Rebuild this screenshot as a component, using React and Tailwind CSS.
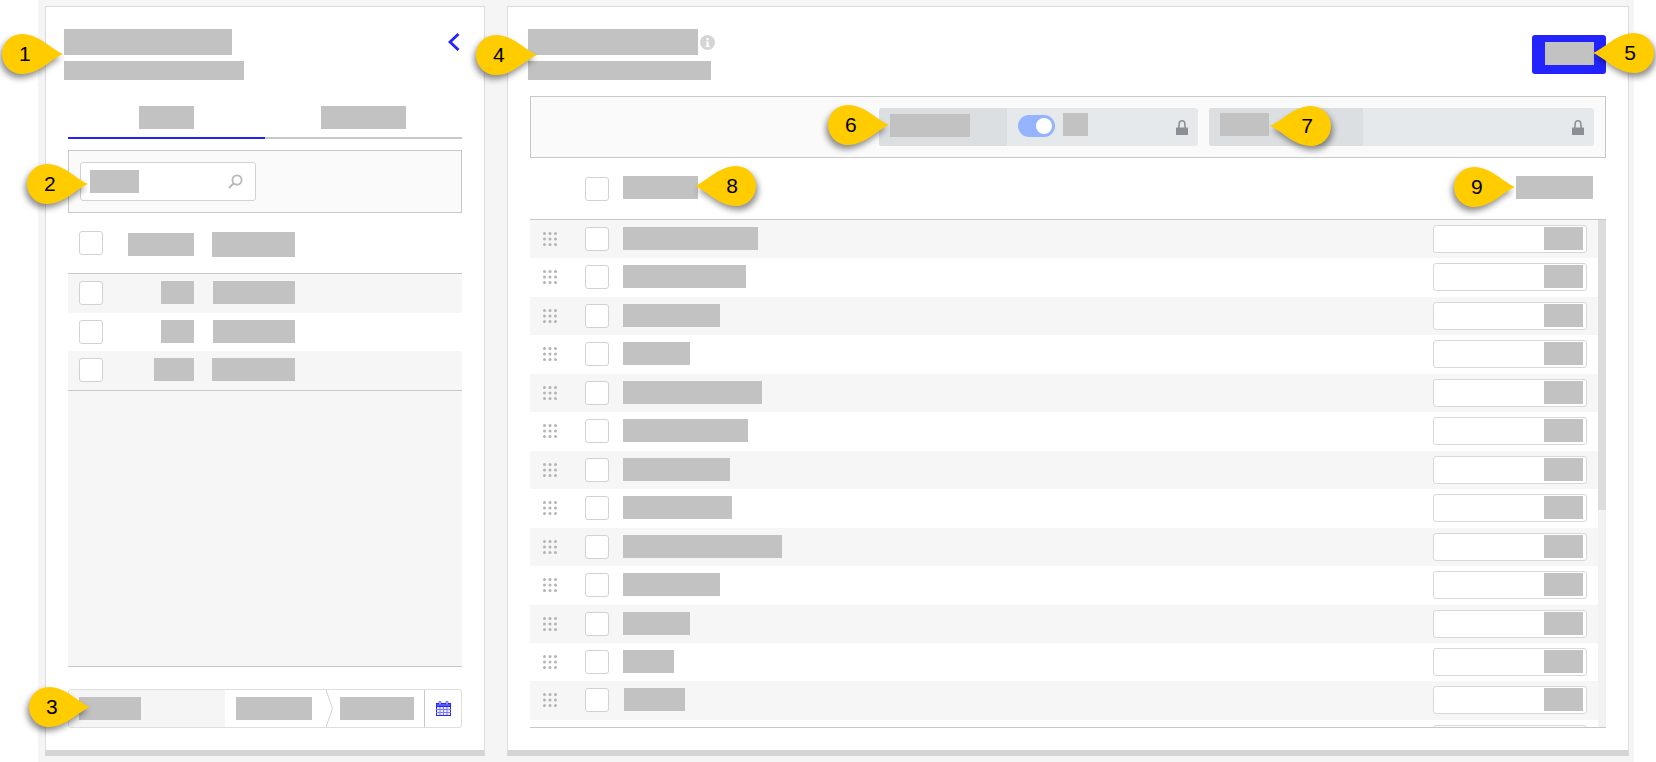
import clsx from 'clsx'

const RIGHT_ROWS = [
  'w-[135px] ml-[14px]',
  'w-[123px] ml-[14px]',
  'w-[97px] ml-[14px]',
  'w-[67px] ml-[14px]',
  'w-[139px] ml-[14px]',
  'w-[125px] ml-[14px]',
  'w-[107px] ml-[14px]',
  'w-[109px] ml-[14px]',
  'w-[159px] ml-[14px]',
  'w-[97px] ml-[14px]',
  'w-[67px] ml-[14px]',
  'w-[51px] ml-[14px]',
  'w-[61px] ml-[15px]',
  'w-[100px] ml-[14px]',
]

const LEFT_ROWS = [
  { first: 'w-[33px]', second: 'w-[82px] ml-[19px]' },
  { first: 'w-[33px]', second: 'w-[82px] ml-[19px]' },
  { first: 'w-[40px]', second: 'w-[83px] ml-[18px]' },
]

const CALLOUTS = [
  { n: 1, pos: 'left-[1px] top-[34px]', dir: 'right' },
  { n: 2, pos: 'left-[26px] top-[164px]', dir: 'right' },
  { n: 3, pos: 'left-[28px] top-[687px]', dir: 'right' },
  { n: 4, pos: 'left-[475px] top-[35px]', dir: 'right' },
  { n: 5, pos: 'left-[1592px] top-[33px]', dir: 'left' },
  { n: 6, pos: 'left-[827px] top-[105px]', dir: 'right' },
  { n: 7, pos: 'left-[1269px] top-[106px]', dir: 'left' },
  { n: 8, pos: 'left-[694px] top-[166px]', dir: 'left' },
  { n: 9, pos: 'left-[1453px] top-[167px]', dir: 'right' },
]

function Block({ className }) {
  return <div className={clsx('shrink-0 bg-[#c2c2c2]', className)} />
}

function Checkbox({ className }) {
  return <div className={clsx('h-6 w-6 shrink-0 rounded-[3px] border border-[#d2d2d2] bg-white', className)} />
}

function Callout({ n, pos, dir }) {
  return (
    <div className={clsx('absolute h-10 w-[63px]', pos)}>
      <svg
        width="63"
        height="40"
        viewBox="0 0 63 40"
        className={clsx(
          'absolute left-0 top-0 overflow-visible drop-shadow-[-2px_4px_3px_rgba(0,0,0,0.45)]',
          dir === 'left' && '-scale-x-100'
        )}
      >
        <path d="M62 20C50 25 38 40 21 40A20 20 0 0 1 21 0C38 0 50 15 62 20Z" fill="#ffcc00" />
      </svg>
      <span
        className={clsx(
          'absolute top-0 text-[21px] leading-10 text-black',
          dir === 'left' ? 'right-[19px]' : 'left-[18px]'
        )}
      >
        {n}
      </span>
    </div>
  )
}

function Lock() {
  return (
    <svg width="12" height="15" viewBox="0 0 12 15" className="ml-auto mr-[10px] shrink-0">
      <path d="M2.8 8L3.2 3.6a2.8 2.8 0 0 1 5.6 0L9.2 8" fill="none" stroke="#8c8f96" strokeWidth="1.6" />
      <rect x="0" y="7.5" width="12" height="7.5" rx="0.5" fill="#8c8f96" />
    </svg>
  )
}

function Dots() {
  const spots = [1.5, 7, 12.5]
  return (
    <svg width="14" height="14" viewBox="0 0 14 14" className="ml-[13px] mt-[12px] shrink-0">
      {spots.map((y) =>
        spots.map((x) => <circle key={`${x}-${y}`} cx={x} cy={y} r="1.5" fill="#b4b4b4" />)
      )}
    </svg>
  )
}

function LeftPanel() {
  return (
    <div className="flex h-[750px] w-[440px] shrink-0 flex-col border-x border-b-[6px] border-t border-x-[#dcdcdc] border-b-[#d5d5d5] border-t-[#dcdcdc] bg-white">
      <div className="flex justify-between pl-[18px] pr-[24px] pt-[22px]">
        <div>
          <Block className="h-[26px] w-[168px]" />
          <Block className="mt-[6px] h-[19px] w-[180px]" />
        </div>
        <svg width="12" height="18" viewBox="0 0 12 18" className="mt-[4px]">
          <polyline points="10.5,1 2,9 10.5,17" fill="none" stroke="#2323ff" strokeWidth="2.8" />
        </svg>
      </div>

      <div className="px-[22px]">
        <div className="mt-[26px] flex">
          <div className="flex flex-1 justify-center border-b-2 border-[#2323ff] pb-2">
            <Block className="h-[23px] w-[55px]" />
          </div>
          <div className="flex flex-1 justify-center border-b-2 border-[#c8c8c8] pb-2">
            <Block className="h-[23px] w-[85px]" />
          </div>
        </div>

        <div className="mt-[11px] h-[63px] border border-[#c8c8c8] bg-[#fafafa] p-[11px]">
          <div className="flex h-[39px] w-[176px] items-center rounded-[3px] border border-[#d2d2d2] bg-white pl-[9px] pr-[12px]">
            <Block className="h-[23px] w-[49px]" />
            <svg width="15" height="15" viewBox="0 0 15 15" className="ml-auto">
              <circle cx="9" cy="6" r="4.6" fill="none" stroke="#b8b8b8" strokeWidth="1.8" />
              <line x1="5.5" y1="9.5" x2="1" y2="14" stroke="#b8b8b8" strokeWidth="2" />
            </svg>
          </div>
        </div>

        <div className="flex h-[61px] items-center border-b border-[#c8c8c8] pl-[11px]">
          <Checkbox />
          <div className="mt-[3px] flex w-[91px] justify-end">
            <Block className="h-[23px] w-[66px]" />
          </div>
          <Block className="ml-[18px] mt-[3px] h-[25px] w-[83px]" />
        </div>

        {LEFT_ROWS.map((row, i) => (
          <div
            key={i}
            className={clsx('flex h-[38.67px] pl-[11px] pt-[7px]', i % 2 === 0 ? 'bg-[#f6f6f6]' : 'bg-white')}
          >
            <Checkbox />
            <div className="flex w-[91px] justify-end">
              <Block className={clsx('h-[23px]', row.first)} />
            </div>
            <Block className={clsx('h-[23px]', row.second)} />
          </div>
        ))}
        <div className="h-[277px] border-y border-[#c8c8c8] bg-[#f6f6f6]" />

        <div className="mt-[22px] flex h-[39px] overflow-hidden rounded-[3px] border border-[#dedede]">
          <div className="flex w-[156px] items-center bg-[#f5f5f5] pl-[10px]">
            <Block className="h-[23px] w-[62px]" />
          </div>
          <div className="flex items-center">
            <Block className="ml-[11px] h-[23px] w-[76px]" />
            <svg width="7" height="37" viewBox="0 0 7 37" className="ml-[14px]">
              <polyline points="0,0 6.5,18.5 0,37" fill="none" stroke="#d2d2d2" />
            </svg>
            <Block className="ml-[7px] h-[23px] w-[74px]" />
          </div>
          <div className="ml-[10px] flex w-[37px] items-center justify-center border-l border-[#c8c8c8]">
            <svg width="15" height="15" viewBox="0 0 15 15">
              <rect x="0.5" y="2.5" width="14" height="12" fill="#eeeeff" stroke="#2323ff" />
              <rect x="0.5" y="2.5" width="14" height="3" fill="#5a5aff" stroke="#2323ff" />
              <path d="M0 8.5H15M0 11.5H15M4 6V14M7.5 6V14M11 6V14" stroke="#7a7aff" strokeWidth="1" />
              <rect x="3" y="0" width="2" height="4" rx="1" fill="#c8c8ff" stroke="#2323ff" strokeWidth="0.6" />
              <rect x="10" y="0" width="2" height="4" rx="1" fill="#c8c8ff" stroke="#2323ff" strokeWidth="0.6" />
            </svg>
          </div>
        </div>
      </div>
    </div>
  )
}

function RightPanel() {
  return (
    <div className="flex h-[750px] w-[1122px] shrink-0 flex-col border-x border-b-[6px] border-t border-x-[#dcdcdc] border-b-[#d5d5d5] border-t-[#dcdcdc] bg-white">
      <div className="flex justify-between pl-[20px] pr-[22px]">
        <div className="pt-[22px]">
          <div className="flex items-center">
            <Block className="h-[26px] w-[170px]" />
            <svg width="15" height="15" viewBox="0 0 15 15" className="ml-[2px]">
              <circle cx="7.5" cy="7.5" r="7.5" fill="#d5d5d5" />
              <rect x="6.5" y="3" width="2.2" height="2.2" fill="#fff" />
              <path d="M5.8 6.4H8.7V10.8H9.8V12H5.6V10.8H6.6V7.6H5.8Z" fill="#fff" />
            </svg>
          </div>
          <Block className="mt-[6px] h-[19px] w-[183px]" />
        </div>
        <div className="mt-[28px] flex h-[39px] w-[74px] justify-center rounded-[3px] bg-[#2323ff] pt-[7px]">
          <Block className="h-[23px] w-[49px]" />
        </div>
      </div>

      <div className="px-[22px]">
        <div className="mt-[16px] flex h-[62px] items-center justify-end gap-[11px] border border-[#c8c8c8] bg-[#fafafa] pr-[11px]">
          <div className="flex h-[38px] w-[319px] items-center overflow-hidden rounded-[3px] bg-[#e6e9ec]">
            <div className="flex h-full w-[128px] items-center bg-[#dcdfe2] pb-[3px] pl-[11px]">
              <Block className="h-[23px] w-[80px]" />
            </div>
            <div className="relative mb-[2px] ml-[11px] h-[22px] w-[37px] rounded-full bg-[#94b4ff]">
              <div className="absolute right-[3px] top-[3px] h-4 w-4 rounded-full bg-white" />
            </div>
            <Block className="mb-[5px] ml-[8px] h-[23px] w-[25px]" />
            <Lock />
          </div>
          <div className="flex h-[38px] w-[385px] items-center overflow-hidden rounded-[3px] bg-[#e6e9ec]">
            <div className="flex h-full w-[154px] items-center bg-[#dcdfe2] pb-[5px] pl-[11px]">
              <Block className="h-[23px] w-[49px]" />
            </div>
            <Lock />
          </div>
        </div>

        <div className="flex h-[62px] items-center border-b border-[#c8c8c8] pl-[55px] pr-[13px]">
          <Checkbox className="mt-[1px]" />
          <Block className="mb-[2px] ml-[14px] h-[23px] w-[75px]" />
          <Block className="mb-[2px] ml-auto h-[23px] w-[77px]" />
        </div>

        <div className="flex h-[508px] overflow-hidden border-b border-[#c8c8c8]">
          <div className="flex-1">
            {RIGHT_ROWS.map((width, i) => (
              <div key={i} className={clsx('flex h-[38.46px]', i % 2 === 0 ? 'bg-[#f6f6f6]' : 'bg-white')}>
                <Dots />
                <Checkbox className="ml-[28px] mt-[7px]" />
                <Block className={clsx('mt-[7px] h-[23px]', width)} />
                <div className="ml-auto mr-[11px] mt-[5px] flex h-[28px] w-[154px] justify-end rounded-[3px] border border-[#d8d8d8] bg-white pr-[3px] pt-[1px]">
                  <Block className="h-[23px] w-[39px]" />
                </div>
              </div>
            ))}
          </div>
          <div className="w-2 shrink-0 bg-[#f2f2f2]">
            <div className="h-[290px] bg-[#dcdcdc]" />
          </div>
        </div>
      </div>
    </div>
  )
}

export default function App() {
  return (
    <div className="relative flex h-[762px] w-[1656px] overflow-hidden bg-white pl-[38px] font-['Liberation_Sans',Arial,sans-serif]">
      <div className="flex w-[1596px] gap-[22px] bg-[#f5f5f5] pl-[7px] pt-[6px]">
        <LeftPanel />
        <RightPanel />
      </div>
      {CALLOUTS.map((c) => (
        <Callout key={c.n} {...c} />
      ))}
    </div>
  )
}
